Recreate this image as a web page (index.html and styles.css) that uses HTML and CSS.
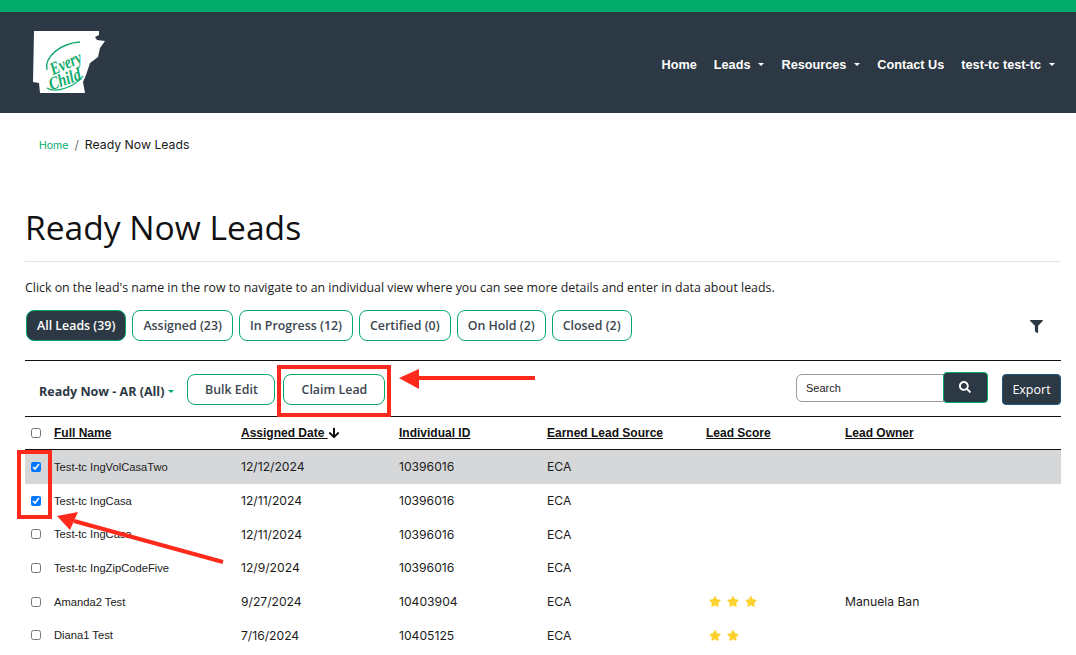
FILE: index.html
```html
<!DOCTYPE html>
<html lang="en">
<head>
<meta charset="utf-8">
<title>Ready Now Leads</title>
<link rel="stylesheet" href="styles.css">
</head>
<body>
<div class="topbar"></div>
<header class="navbar">
  <a class="logo" href="#">
    <svg class="logo-svg" viewBox="0 0 74 64" width="74" height="64">
      <path class="state" d="M2 1H67V5L63 7L65 10L73 11L68 18L66 27L58 33L54 45L51 52L53 63H8L7 53L1 52Z"/>
      <path class="swoosh" d="M15 40C12 26 30 13 48 12"/>
      <path class="swoosh" d="M15 58C24 64 44 56 51 46"/>
      <text class="logo-text" x="34" y="39" text-anchor="middle" textLength="33" lengthAdjust="spacingAndGlyphs" transform="rotate(-24 34 34)">Every</text>
      <text class="logo-text" x="33" y="55" text-anchor="middle" textLength="33" lengthAdjust="spacingAndGlyphs" transform="rotate(-20 33 50)">Child</text>
    </svg>
  </a>
  <nav class="menu">
    <a href="#">Home</a>
    <a href="#" class="drop">Leads</a>
    <a href="#" class="drop">Resources</a>
    <a href="#">Contact Us</a>
    <a href="#" class="drop">test-tc test-tc</a>
  </nav>
</header>
<ol class="crumbs">
  <li class="crumb-home"><a href="#">Home</a></li>
  <li class="crumb-sep">/</li>
  <li class="crumb-now">Ready Now Leads</li>
</ol>
<main class="content">
  <h1 class="title">Ready Now Leads</h1>
  <p class="intro">Click on the lead's name in the row to navigate to an individual view where you can see more details and enter in data about leads.</p>
  <div class="tabs-row">
    <div class="tabs">
      <button class="pill pill-active">All Leads (39)</button>
      <button class="pill">Assigned (23)</button>
      <button class="pill">In Progress (12)</button>
      <button class="pill">Certified (0)</button>
      <button class="pill">On Hold (2)</button>
      <button class="pill">Closed (2)</button>
    </div>
    <svg class="filter" viewBox="0 0 512 512"><path d="M487.976 0H24.028C2.71 0-8.047 25.866 7.058 40.971L192 225.941V432c0 7.831 3.821 15.17 10.237 19.662l80 55.98C298.02 518.69 320 507.493 320 487.98V225.941l184.947-184.97C520.021 25.896 509.338 0 487.976 0z"/></svg>
  </div>
  <div class="toolbar">
    <span class="view">Ready Now - AR (All)</span>
    <button class="tool tool-bulk">Bulk Edit</button>
    <button class="tool tool-claim">Claim Lead</button>
    <div class="search">
      <input class="search-input" type="text" placeholder="Search">
      <button class="search-btn"><svg viewBox="0 0 512 512"><path d="M505 442.7L405.3 343c-4.5-4.5-10.6-7-17-7H372c27.6-35.3 44-79.7 44-128C416 93.1 322.9 0 208 0S0 93.1 0 208s93.1 208 208 208c48.3 0 92.7-16.4 128-44v16.3c0 6.4 2.5 12.5 7 17l99.7 99.7c9.4 9.4 24.6 9.4 33.9 0l28.3-28.3c9.4-9.4 9.4-24.6.1-34zM208 336c-70.7 0-128-57.2-128-128 0-70.7 57.2-128 128-128 70.7 0 128 57.2 128 128 0 70.7-57.2 128-128 128z"/></svg></button>
    </div>
    <button class="export">Export</button>
  </div>
  <table class="leads">
    <colgroup>
      <col class="c-check"><col class="c-name"><col class="c-date"><col class="c-id"><col class="c-source"><col class="c-score"><col>
    </colgroup>
    <thead>
      <tr>
        <th><input class="check" type="checkbox"></th>
        <th><a href="#">Full Name</a></th>
        <th><a href="#">Assigned Date </a><svg class="sort" viewBox="0 0 448 512"><path d="M413.1 222.5l22.2 22.2c9.4 9.4 9.4 24.6 0 33.9L241 473c-9.4 9.4-24.6 9.4-33.9 0L12.7 278.6c-9.4-9.4-9.4-24.6 0-33.9l22.2-22.2c9.5-9.5 25-9.3 34.3.4L184 343.4V56c0-13.3 10.7-24 24-24h32c13.3 0 24 10.7 24 24v287.4l114.8-120.5c9.3-9.8 24.8-10 34.3-.4z"/></svg></th>
        <th><a href="#">Individual ID</a></th>
        <th><a href="#">Earned Lead Source</a></th>
        <th><a href="#">Lead Score</a></th>
        <th><a href="#">Lead Owner</a></th>
      </tr>
    </thead>
    <tbody>
      <tr class="selected">
        <td><input class="check" type="checkbox" checked></td><td class="name">Test-tc IngVolCasaTwo</td><td>12/12/2024</td><td>10396016</td><td>ECA</td><td></td><td></td>
      </tr>
      <tr>
        <td><input class="check" type="checkbox" checked></td><td class="name">Test-tc IngCasa</td><td>12/11/2024</td><td>10396016</td><td>ECA</td><td></td><td></td>
      </tr>
      <tr>
        <td><input class="check" type="checkbox"></td><td class="name">Test-tc IngCasa</td><td>12/11/2024</td><td>10396016</td><td>ECA</td><td></td><td></td>
      </tr>
      <tr>
        <td><input class="check" type="checkbox"></td><td class="name">Test-tc IngZipCodeFive</td><td>12/9/2024</td><td>10396016</td><td>ECA</td><td></td><td></td>
      </tr>
      <tr>
        <td><input class="check" type="checkbox"></td><td class="name">Amanda2 Test</td><td>9/27/2024</td><td>10403904</td><td>ECA</td>
        <td><div class="stars">
          <svg viewBox="0 0 576 512"><path d="M259.3 17.8L194 150.2 47.9 171.5c-26.2 3.8-36.7 36.1-17.7 54.6l105.7 103-25 145.5c-4.5 26.3 23.2 46 46.4 33.7L288 439.6l130.7 68.7c23.2 12.2 50.9-7.4 46.4-33.7l-25-145.5 105.7-103c19-18.5 8.5-50.8-17.7-54.6L382 150.2 316.7 17.8c-11.7-23.6-45.6-23.9-57.4 0z"/></svg>
          <svg viewBox="0 0 576 512"><path d="M259.3 17.8L194 150.2 47.9 171.5c-26.2 3.8-36.7 36.1-17.7 54.6l105.7 103-25 145.5c-4.5 26.3 23.2 46 46.4 33.7L288 439.6l130.7 68.7c23.2 12.2 50.9-7.4 46.4-33.7l-25-145.5 105.7-103c19-18.5 8.5-50.8-17.7-54.6L382 150.2 316.7 17.8c-11.7-23.6-45.6-23.9-57.4 0z"/></svg>
          <svg viewBox="0 0 576 512"><path d="M259.3 17.8L194 150.2 47.9 171.5c-26.2 3.8-36.7 36.1-17.7 54.6l105.7 103-25 145.5c-4.5 26.3 23.2 46 46.4 33.7L288 439.6l130.7 68.7c23.2 12.2 50.9-7.4 46.4-33.7l-25-145.5 105.7-103c19-18.5 8.5-50.8-17.7-54.6L382 150.2 316.7 17.8c-11.7-23.6-45.6-23.9-57.4 0z"/></svg>
        </div></td>
        <td>Manuela Ban</td>
      </tr>
      <tr>
        <td><input class="check" type="checkbox"></td><td class="name">Diana1 Test</td><td>7/16/2024</td><td>10405125</td><td>ECA</td>
        <td><div class="stars">
          <svg viewBox="0 0 576 512"><path d="M259.3 17.8L194 150.2 47.9 171.5c-26.2 3.8-36.7 36.1-17.7 54.6l105.7 103-25 145.5c-4.5 26.3 23.2 46 46.4 33.7L288 439.6l130.7 68.7c23.2 12.2 50.9-7.4 46.4-33.7l-25-145.5 105.7-103c19-18.5 8.5-50.8-17.7-54.6L382 150.2 316.7 17.8c-11.7-23.6-45.6-23.9-57.4 0z"/></svg>
          <svg viewBox="0 0 576 512"><path d="M259.3 17.8L194 150.2 47.9 171.5c-26.2 3.8-36.7 36.1-17.7 54.6l105.7 103-25 145.5c-4.5 26.3 23.2 46 46.4 33.7L288 439.6l130.7 68.7c23.2 12.2 50.9-7.4 46.4-33.7l-25-145.5 105.7-103c19-18.5 8.5-50.8-17.7-54.6L382 150.2 316.7 17.8c-11.7-23.6-45.6-23.9-57.4 0z"/></svg>
        </div></td>
        <td></td>
      </tr>
    </tbody>
  </table>
</main>
<svg class="annotations" viewBox="0 0 1076 655" width="1076" height="655">
  <rect class="mark" x="279" y="367" width="110" height="48"/>
  <rect class="mark" x="19" y="452" width="31" height="65"/>
  <path class="mark-line" d="M415 378H535"/>
  <path class="mark-head" d="M399 378L419 369V389Z"/>
  <path class="mark-line" d="M74 521L223 562"/>
  <path class="mark-head" d="M57 516L78 512L70 530Z"/>
</svg>
</body>
</html>
```
FILE: styles.css
```css
* { box-sizing: border-box; }

html, body {
  margin: 0;
  height: 655px;
  overflow: hidden;
  background: #fff;
}

body {
  position: relative;
  font-family: "Inter", "Liberation Sans", sans-serif;
  color: #1b1b1b;
}

a { color: inherit; }

.topbar { height: 12px; background: #02ab6c; }

.navbar {
  height: 101px;
  background: #2c3843;
  display: flex;
  align-items: flex-start;
  justify-content: space-between;
  padding: 18px 21px 0 32px;
}

.logo { display: block; height: 64px; }
.logo-svg { display: block; }
.state { fill: #fff; }
.swoosh { fill: none; stroke: #10ab6b; stroke-width: 1.3; }
.logo-text {
  font-family: "Liberation Serif", serif;
  font-style: italic;
  font-weight: 700;
  font-size: 18px;
  fill: #10ab6b;
}

.menu {
  display: flex;
  gap: 17px;
  margin-top: 28px;
  font-family: "Liberation Sans", sans-serif;
  font-weight: 700;
  font-size: 12.7px;
  line-height: 14px;
  color: #fff;
}
.menu a { text-decoration: none; white-space: nowrap; }
.drop::after {
  content: "";
  display: inline-block;
  margin-left: 8px;
  vertical-align: 3px;
  border-top: 3px solid #fff;
  border-left: 3px solid transparent;
  border-right: 3px solid transparent;
}

.crumbs {
  list-style: none;
  margin: 0;
  padding: 24px 0 0 39px;
  height: 64px;
  display: flex;
  align-items: baseline;
  line-height: 16px;
}
.crumb-home { font-size: 10.5px; color: #02ab6c; }
.crumb-home a { text-decoration: none; }
.crumb-sep { font-size: 12.25px; color: #6c757d; margin: 0 6px; }
.crumb-now { font-size: 12.25px; color: #1b1b1b; }

.content { padding: 0 15px 0 25px; }

.title {
  margin: 0;
  padding-bottom: 11px;
  height: 85px;
  display: flex;
  align-items: flex-end;
  font-family: "Open Sans", sans-serif;
  font-weight: 400;
  font-size: 33.6px;
  line-height: 46px;
  color: #111;
  border-bottom: 1px solid #e2e3e5;
}

.intro {
  margin: 17px 0 0;
  font-family: "Open Sans", sans-serif;
  font-size: 12.37px;
  line-height: 17px;
  color: #1b1b1b;
  white-space: nowrap;
}

.tabs-row {
  display: flex;
  align-items: flex-start;
  justify-content: space-between;
  margin-top: 14px;
  height: 51px;
  padding: 0 18px 0 1px;
  border-bottom: 1px solid #111;
}
.tabs { display: flex; gap: 6px; }

.pill, .tool {
  height: 31px;
  padding: 0;
  background: #fff;
  border: 1px solid #02ab6c;
  border-radius: 8px;
  font-family: "Open Sans", sans-serif;
  font-weight: 600;
  font-size: 12.4px;
  color: #3b4650;
  white-space: nowrap;
}
.pill { padding: 0 10px; }
.pill-active { background: #2c3843; color: #fff; }

.filter { width: 13px; height: 13px; margin-top: 10px; fill: #2c3843; }

.toolbar {
  height: 56px;
  display: flex;
  align-items: flex-start;
  padding-top: 13px;
  border-bottom: 1px solid #111;
}
.view {
  margin: 9px 13px 0 14px;
  font-family: "Open Sans", sans-serif;
  font-weight: 700;
  font-size: 12.5px;
  line-height: 17px;
  color: #2c3843;
  white-space: nowrap;
}
.view::after {
  content: "";
  display: inline-block;
  margin-left: 4px;
  vertical-align: 3px;
  border-top: 3px solid #02ab6c;
  border-left: 3px solid transparent;
  border-right: 3px solid transparent;
}
.tool-bulk { width: 88px; margin-right: 8px; }
.tool-claim { width: 102px; }

.search { display: flex; align-items: flex-start; margin-left: auto; margin-top: -2px; }
.search-input {
  width: 148px;
  height: 28px;
  margin-top: 2px;
  padding: 0 9px;
  border: 1px solid #9b9b9b;
  border-radius: 6px 0 0 6px;
  font-family: "Liberation Sans", sans-serif;
  font-size: 11px;
  outline: none;
}
.search-input::placeholder { color: #222; opacity: 1; }
.search-btn {
  width: 45px;
  height: 31px;
  margin-left: -1px;
  padding: 0;
  background: #2c3843;
  border: 1px solid #02ab6c;
  border-radius: 4px;
  display: flex;
  align-items: center;
  justify-content: center;
}
.search-btn svg { width: 12px; height: 12px; fill: #fff; margin-top: -1px; margin-left: -2px; }

.export {
  width: 59px;
  height: 31px;
  margin-left: 14px;
  padding: 0;
  background: #2c3843;
  border: 1px solid #1f5a80;
  border-radius: 4px;
  font-family: "Open Sans", sans-serif;
  font-size: 12.5px;
  color: #fff;
}

.leads {
  width: 1036px;
  table-layout: fixed;
  border-collapse: separate;
  border-spacing: 0;
}
.c-check { width: 29px; }
.c-name { width: 187px; }
.c-date { width: 158px; }
.c-id { width: 148px; }
.c-source { width: 159px; }
.c-score { width: 139px; }

.leads th {
  height: 33px;
  padding: 0;
  text-align: left;
  font-family: "Liberation Sans", sans-serif;
  font-weight: 700;
  font-size: 12px;
  color: #111;
  border-bottom: 1px solid #111;
  white-space: nowrap;
}
.leads td {
  height: 33.7px;
  padding: 0;
  font-size: 12.15px;
  color: #1b1b1b;
  vertical-align: middle;
}
.leads td.name { font-family: "Liberation Sans", sans-serif; font-size: 11.2px; }
.selected td { background: #d6d7d9; }

.check {
  display: block;
  width: 10px;
  height: 10px;
  margin: 0 0 0 6px;
}

.sort { width: 12px; height: 12px; vertical-align: -2px; }

.stars { display: flex; gap: 6px; margin-left: 3px; }
.stars svg { width: 12px; height: 11px; fill: #fdd22f; }

.annotations { position: absolute; left: 0; top: 0; pointer-events: none; }
.mark { fill: none; stroke: #ff2a1c; stroke-width: 4; }
.mark-line { fill: none; stroke: #ff2a1c; stroke-width: 4; }
.mark-head { fill: #ff2a1c; }
```
